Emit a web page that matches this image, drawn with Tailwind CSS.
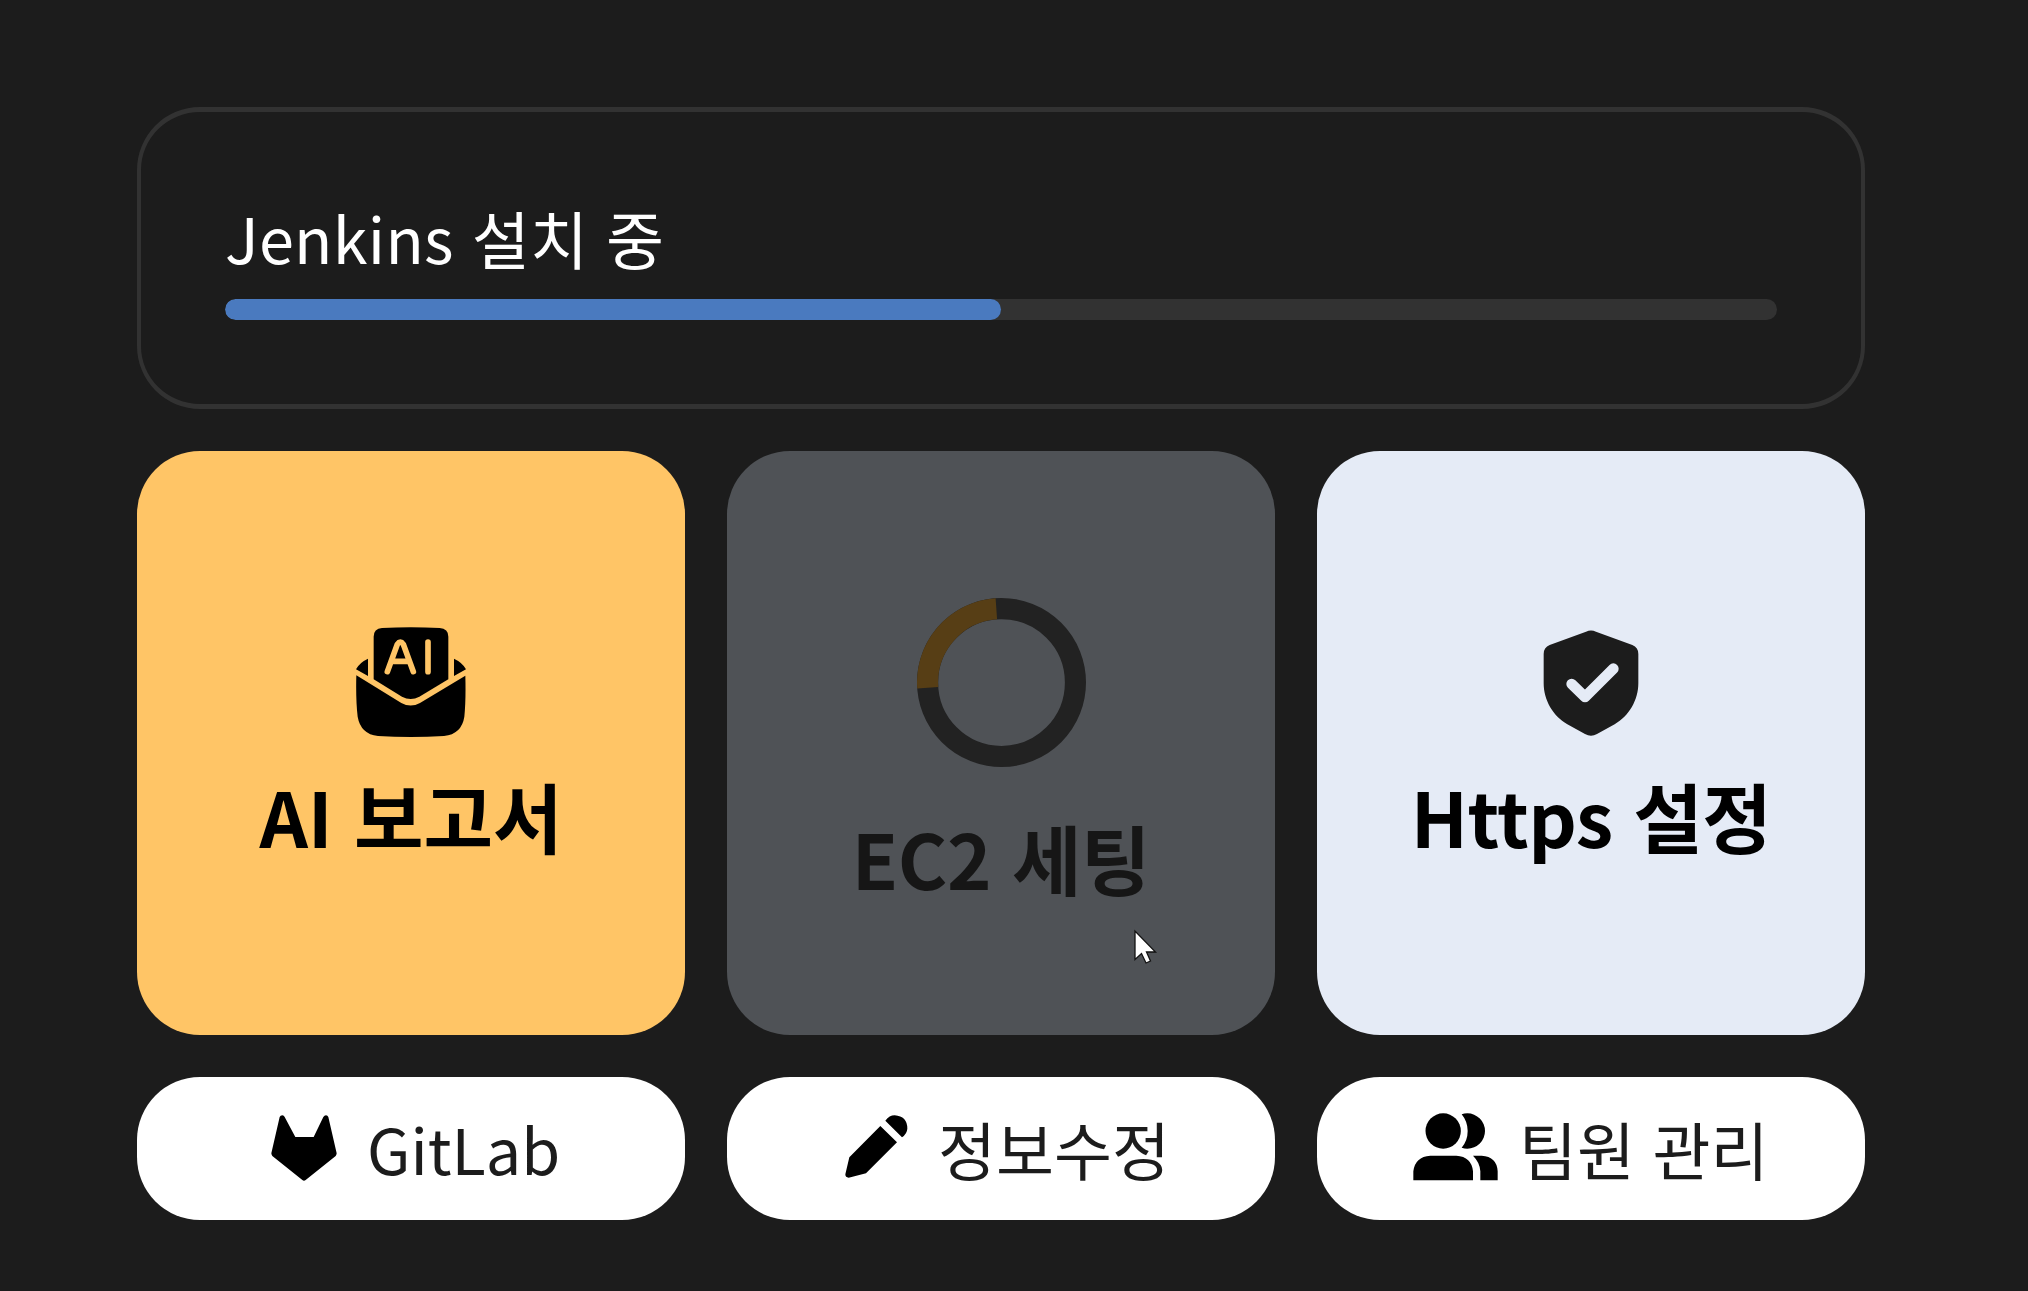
<!DOCTYPE html>
<html lang="ko">
<head>
<meta charset="utf-8">
<title>Jenkins 설치</title>
<script src="https://cdn.jsdelivr.net/npm/@tailwindcss/browser@4"></script>
</head>
<body class="relative h-[1291px] w-[2028px] overflow-hidden bg-[#1c1c1c] font-['Noto_Sans_CJK_KR',sans-serif]">
<main class="ml-[137px] flex w-[1728px] flex-col gap-[42px] pt-[107px]">
  <section class="flex h-[302px] flex-col rounded-[63px] border-x-4 border-y-[5px] border-[#323232] px-[84px] pt-[79px]">
    <h1 class="whitespace-nowrap text-[63px] leading-[91px] tracking-[0.25px] text-white">Jenkins 설치 중</h1>
    <div class="mt-[17px] h-[21px] overflow-hidden rounded-[10.5px] bg-[#323232]">
      <div class="h-full rounded-[10.5px] bg-[#4a7abf]" style="width:50%"></div>
    </div>
  </section>

  <section class="grid h-[584px] grid-cols-3 gap-[42px] text-[75.6px] leading-[110px] font-semibold">
    <div class="flex flex-col items-center rounded-[63px] bg-[#ffc566] pt-[176px] text-black">
      <svg class="h-[110px] w-[110px] shrink-0" viewBox="48 51 330 330">
        <path d="M101 208V80Q101 56 126 54Q212 50 299 54Q325 56 325 80V208L238 260Q212 274 186 260Z"/>
        <path d="M84 146V198L48 178Q58 158 84 146ZM342 146V198L378 178Q368 158 342 146Z"/>
        <path d="M49 196L184 279Q212 294 240 279L376 197Q378 270 373 320Q365 372 312 378Q212 384 114 378Q62 372 53 320Q47 270 49 196Z"/>
        <path d="M142 185L172 103Q181 90 190 103L220 185M154 154H208M264 96V185" fill="none" stroke="#ffc566" stroke-width="17" stroke-linecap="round" stroke-linejoin="round"/>
      </svg>
      <span class="mt-[23px] whitespace-nowrap">AI 보고서</span>
    </div>
    <div class="flex flex-col items-center rounded-[63px] bg-[#4f5256] pt-[147px] text-[#161616]">
      <svg class="h-[169px] w-[169px] shrink-0" viewBox="0 0 168 168" fill="none" stroke-width="21">
        <circle cx="84" cy="84" r="73.5" stroke="#222222"/>
        <circle cx="84" cy="84" r="73.5" stroke="#573e15" pathLength="360" stroke-dasharray="90 270" transform="rotate(176 84 84)"/>
      </svg>
      <span class="mt-[35px] whitespace-nowrap tracking-[-0.4px]">EC2 세팅</span>
    </div>
    <div class="flex flex-col items-center rounded-[63px] bg-[#e5ebf6] pt-[179px] text-black">
      <svg class="h-[106px] w-[96px] shrink-0" viewBox="70 58 288 318">
        <path fill="#1c1c1c" d="M199 63Q214 56 229 63L338 103Q356 110 356 130V218C356 268 328 316 285 341L232 370Q214 380 196 370L143 341C100 316 72 268 72 218V130Q72 110 90 103Z"/>
        <path d="M156 220L196 259L281 174" fill="none" stroke="#e5ebf6" stroke-width="32" stroke-linecap="round" stroke-linejoin="round"/>
      </svg>
      <span class="mt-[24px] whitespace-nowrap tracking-[-0.6px]">Https 설정</span>
    </div>
  </section>

  <section class="grid h-[143px] grid-cols-3 gap-[42px] text-[63px] leading-[91px] text-[#1c1c1c]">
    <div class="flex items-center rounded-[63px] bg-white pl-[134px]">
      <svg class="mb-[2px] h-[66px] w-[66px] shrink-0" viewBox="62 74 198 198">
        <path d="M88 80Q90 75 96 75Q101 75 103 80L135 140H190L219 80Q222 75 227 75Q232 75 234 80L259 189Q259 193 256 197L166 269Q161 273 156 269L66 197Q63 193 63 189Z"/>
      </svg>
      <span class="ml-[30px] whitespace-nowrap pb-[2px]">GitLab</span>
    </div>
    <div class="flex items-center rounded-[63px] bg-white pl-[118px]">
      <svg class="mb-[4px] h-[63px] w-[63px] shrink-0" viewBox="75 74 189 189">
        <path d="M181 107L231 156L138 249L86 262Q76 262 76 252L88 201ZM196 91Q208 75 224 75Q262 78 262 115Q261 130 246 141Z"/>
      </svg>
      <span class="ml-[30px] whitespace-nowrap pb-[2px]">정보수정</span>
    </div>
    <div class="flex items-center rounded-[63px] bg-white pl-[96px]">
      <svg class="mb-[4px] h-[68px] w-[85px] shrink-0" viewBox="68 67 255 204">
        <circle cx="158.500" cy="121" r="53"/>
        <path d="M214 71Q222 68 231 68A53 53 0 0 1 231 174Q222 174 214 171Q232 150 232 121Q232 93 214 71ZM69 269V242Q74 198 120 195H198Q244 198 248 242V269ZM248 195H274Q320 198 322 242V269H270V242Q269 216 248 195Z"/>
      </svg>
      <span class="ml-[21px] whitespace-nowrap pb-[2px]">팀원 관리</span>
    </div>
  </section>
</main>
<svg class="absolute left-[1133px] top-[929px] h-[36px] w-[25px]" viewBox="1133 929 25 36">
  <path d="M1135 931V959.500L1141.500 953.500L1146 963L1150.500 961L1146.500 952H1155.500Z" fill="#fff" stroke="#111" stroke-width="1.300"/>
</svg>
</body>
</html>
